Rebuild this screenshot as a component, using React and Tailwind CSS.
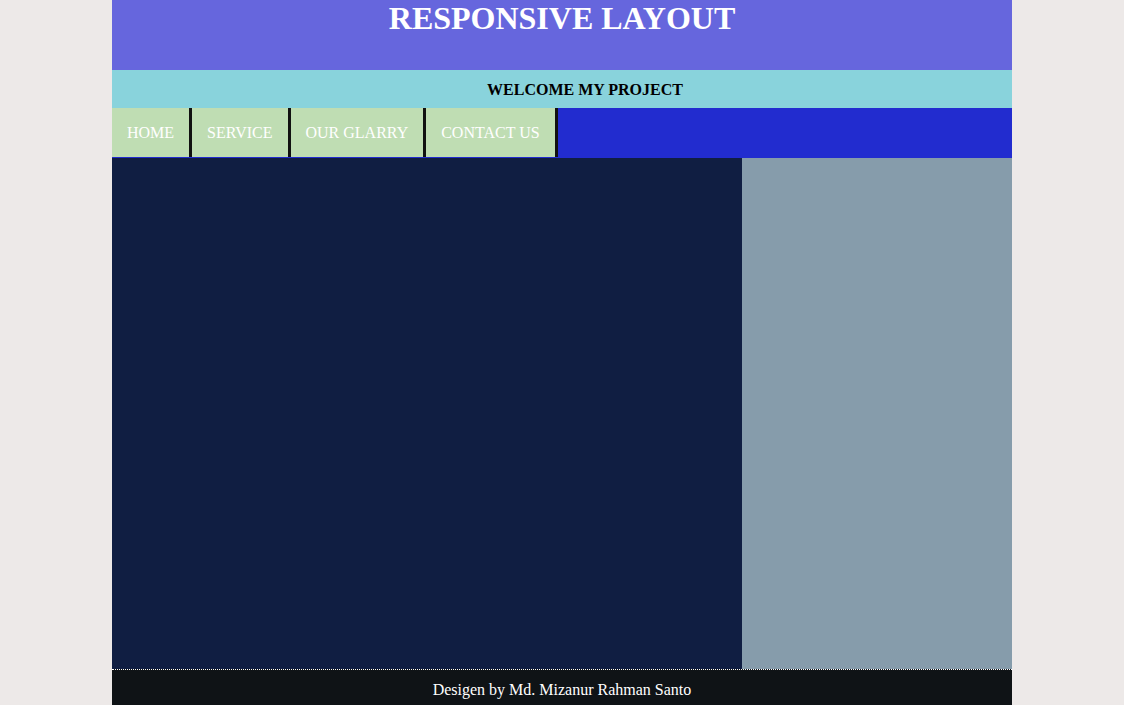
export default function App() {
  const items = ["HOME", "SERVICE", "OUR GLARRY", "CONTACT US"];
  return (
    <div className="min-h-[705px] bg-[#ede9e8] font-['Liberation_Serif',serif]">
      <div className="mx-auto w-[900px]">
        <div className="h-[70px] bg-[#6666dd] text-center">
          <h1 className="m-0 text-[32px] font-bold leading-[37px] text-white">RESPONSIVE LAYOUT</h1>
        </div>
        <div className="flex h-[38px] items-center justify-center bg-[#89d3dc] pl-[46px] pt-[2px]">
          <h3 className="text-[16px] font-bold text-black">WELCOME MY PROJECT</h3>
        </div>
        <div className="flex h-[50px] bg-[#222ccf]">
          {items.map((t) => (
            <div
              key={t}
              className="flex h-[49px] items-center border-r-[3px] border-[#111] bg-[#bfddb3] px-[15px] text-[16px] text-white"
            >
              {t}
            </div>
          ))}
        </div>
        <div className="flex h-[511px]">
          <div className="w-[630px] bg-[#101e42]"></div>
          <div className="flex-1 bg-[#869cab]"></div>
        </div>
        <div className="flex h-[36px] items-center justify-center border-t border-dotted border-white bg-[#0f1316] pt-[4px] text-[16px] text-white">
          Desigen by Md. Mizanur Rahman Santo
        </div>
      </div>
    </div>
  );
}
